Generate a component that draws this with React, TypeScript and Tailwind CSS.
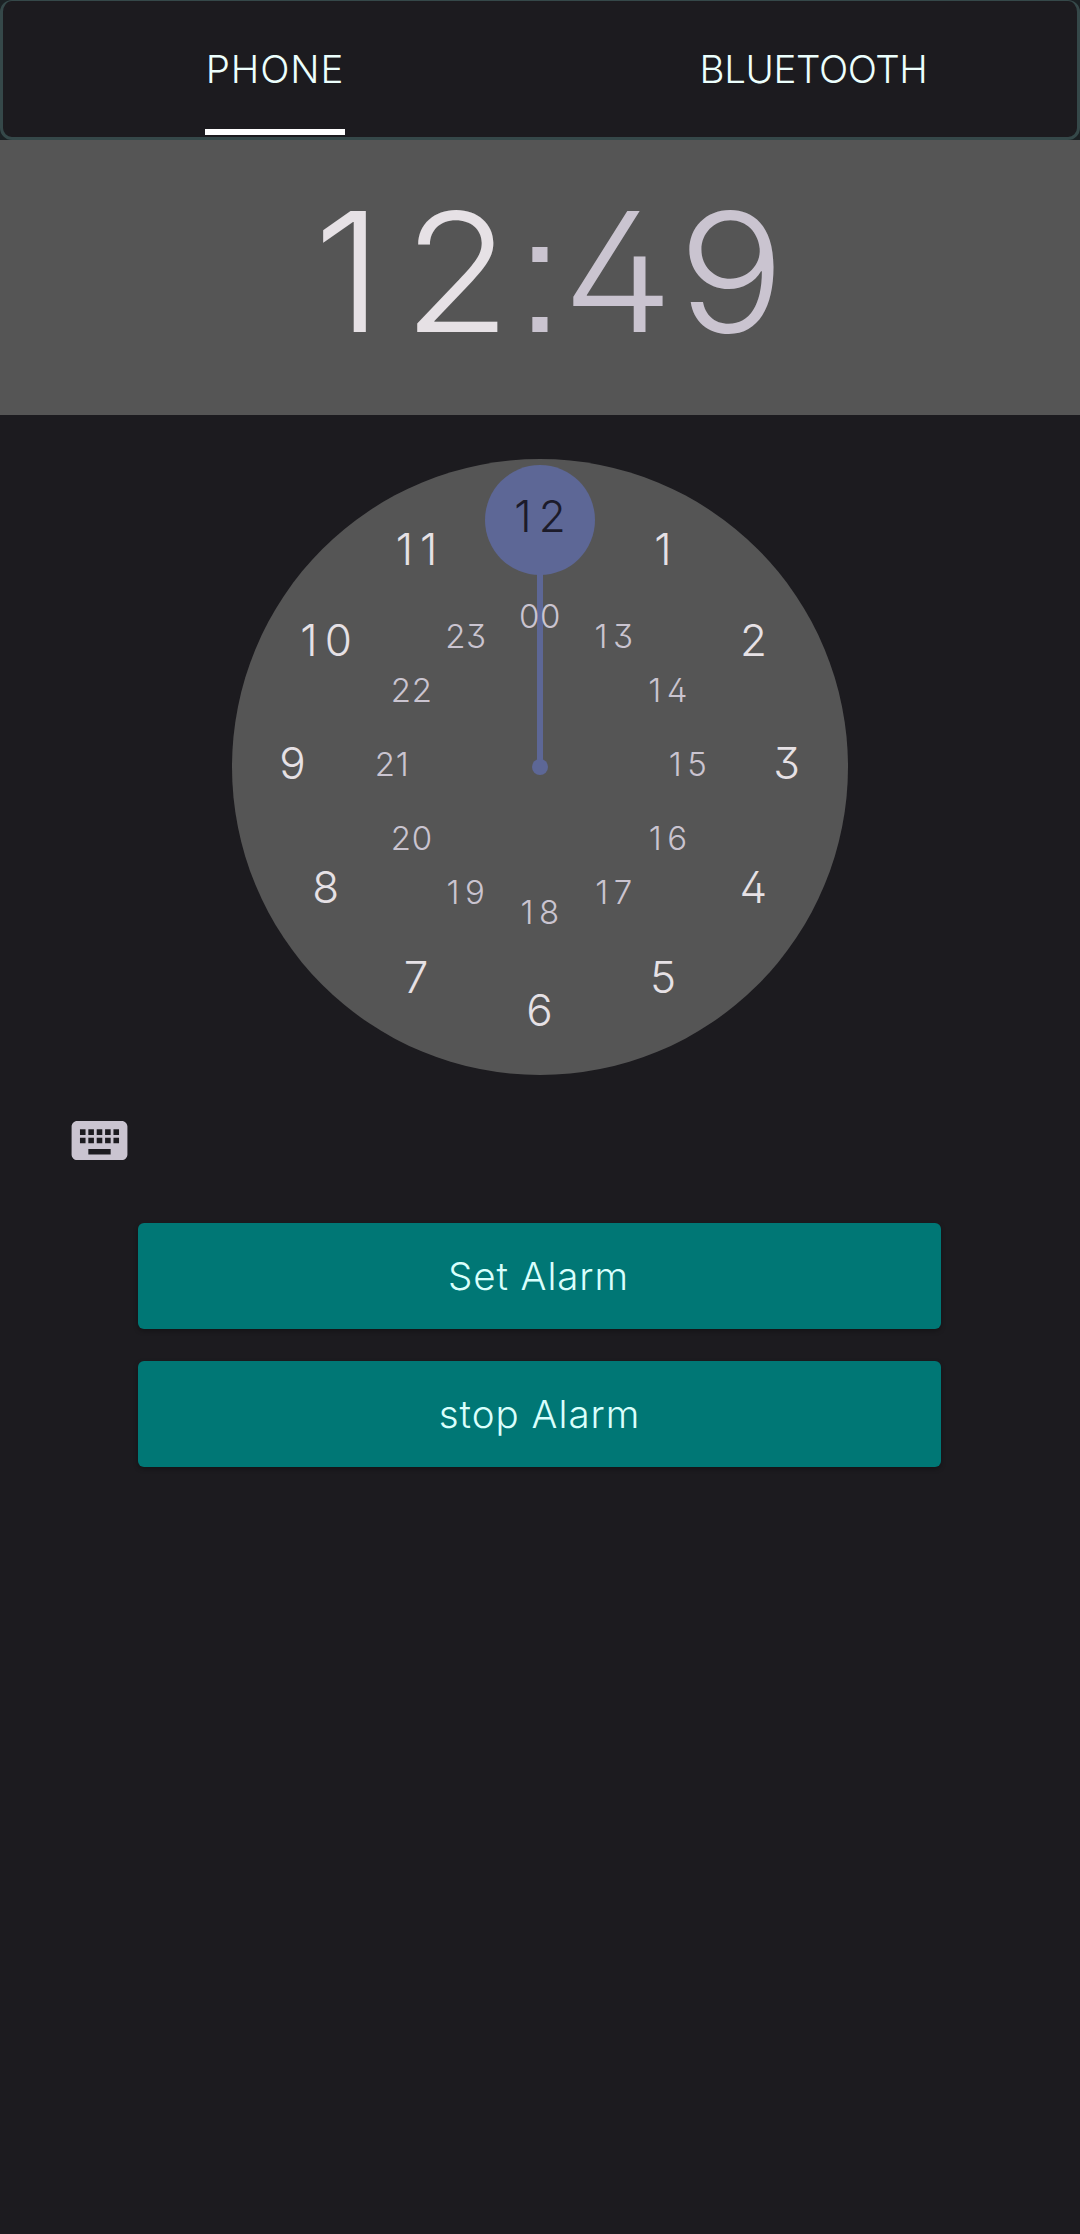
const OUTER = ["12", "1", "2", "3", "4", "5", "6", "7", "8", "9", "10", "11"];
const INNER = ["00", "13", "14", "15", "16", "17", "18", "19", "20", "21", "22", "23"];

function point(i: number, radius: number, cy: number) {
  const a = (i * Math.PI) / 6;
  return { x: 308 + radius * Math.sin(a), y: cy - radius * Math.cos(a) };
}

function Dial() {
  return (
    <svg className="mx-auto mt-11 block h-[616px] w-[616px] shrink-0" viewBox="0 0 616 616">
      <circle cx="308" cy="308" r="308" fill="#555555" />
      <circle cx="308" cy="61" r="55" fill="#5d6796" />
      <path d="M308 61V308" stroke="#5d6796" strokeWidth="6" />
      <circle cx="308" cy="308" r="8" fill="#5d6796" />
      {OUTER.map((n, i) => {
        const p = point(i, 247, 304);
        return (
          <text
            key={n}
            x={p.x + (n.length > 1 ? 3.5 : -0.5)}
            y={p.y + 16}
            textAnchor="middle"
            className={
              n.length > 1 ? "text-[44px] font-[350] tracking-[7px]" : "text-[44px] font-[350]"
            }
            fill={i === 0 ? "#1c1b2a" : "#e6e1e5"}
          >
            {n}
          </text>
        );
      })}
      {INNER.map((n, i) => {
        const p = point(i, 148, 305);
        const narrow = n.startsWith("1");
        return (
          <text
            key={n}
            x={p.x + (narrow ? 2.5 : 0)}
            y={p.y + 12}
            textAnchor="middle"
            className={
              narrow
                ? "text-[33px] font-[260] tracking-[5.5px]"
                : "text-[33px] font-[260] tracking-[0.7px]"
            }
            fill="#cac4d0"
          >
            {n}
          </text>
        );
      })}
    </svg>
  );
}

function KeyboardIcon() {
  return (
    <svg className="h-[67px] w-[67px]" viewBox="0 0 24 24" fill="#cac4d0">
      <path d="M20 5H4c-1.1 0-1.99.9-1.99 2L2 17c0 1.1.9 2 2 2h16c1.1 0 2-.9 2-2V7c0-1.1-.9-2-2-2zm-9 3h2v2h-2V8zm0 3h2v2h-2v-2zM8 8h2v2H8V8zm0 3h2v2H8v-2zm-1 2H5v-2h2v2zm0-3H5V8h2v2zm9 7H8v-2h8v2zm0-4h-2v-2h2v2zm0-3h-2V8h2v2zm3 3h-2v-2h2v2zm0-3h-2V8h2v2z" />
    </svg>
  );
}

export default function App() {
  return (
    <div className="flex h-[2234px] w-[1080px] flex-col overflow-hidden bg-[#1c1b1f] font-['Inter',sans-serif] [font-feature-settings:'cv02','cv09']">
      <div className="h-[140px] shrink-0 bg-[#1b2124]">
        <nav className="flex h-[140px] rounded-xl border-[3px] border-t border-[#354849] bg-[#1c1b1f] text-[38.5px] font-[350] leading-none text-[#ecfffd]">
          <div className="flex w-1/2 justify-center pl-[7px]">
            <div className="flex h-[134px] w-[140px] items-center justify-center border-b-[6px] border-white pt-2">
              <span className="tracking-[0.9px]">PHONE</span>
            </div>
          </div>
          <div className="flex w-1/2 items-center justify-center pl-[10px]">
            <span className="tracking-[-0.4px]">BLUETOOTH</span>
          </div>
        </nav>
      </div>

      <div className="flex h-[275px] shrink-0 bg-[#555555] pt-[49px] text-[166px] font-[350] leading-[166px] [font-feature-settings:'cv02','ss07']">
        <div className="w-[511px] origin-right scale-x-[1.06] text-right text-[#e6e1e5]">
          <span className="tracking-[19px]">1</span>2
        </div>
        <div className="ml-[7px] flex w-[44px] justify-center text-[#cac4d0]">:</div>
        <div className="w-[220px] origin-left scale-x-[1.07] tracking-[4px] text-[#cac4d0]">49</div>
      </div>

      <Dial />

      <div className="mt-8 ml-[65.5px] h-[67px]">
        <KeyboardIcon />
      </div>

      <div className="mt-[49px] ml-[138px] flex w-[803px] flex-col gap-8 text-[38.5px] font-[350] leading-none text-[#d9fffc]">
        <button className="h-[106px] rounded-md bg-[#007775] pr-[2px] shadow-[0_2px_5px_rgba(0,0,0,0.3)]">
          <span className="tracking-[0.9px]">Set Alarm</span>
        </button>
        <button className="h-[106px] rounded-md bg-[#007775] shadow-[0_2px_5px_rgba(0,0,0,0.3)]">
          <span className="tracking-[1px]">stop Alarm</span>
        </button>
      </div>
    </div>
  );
}
